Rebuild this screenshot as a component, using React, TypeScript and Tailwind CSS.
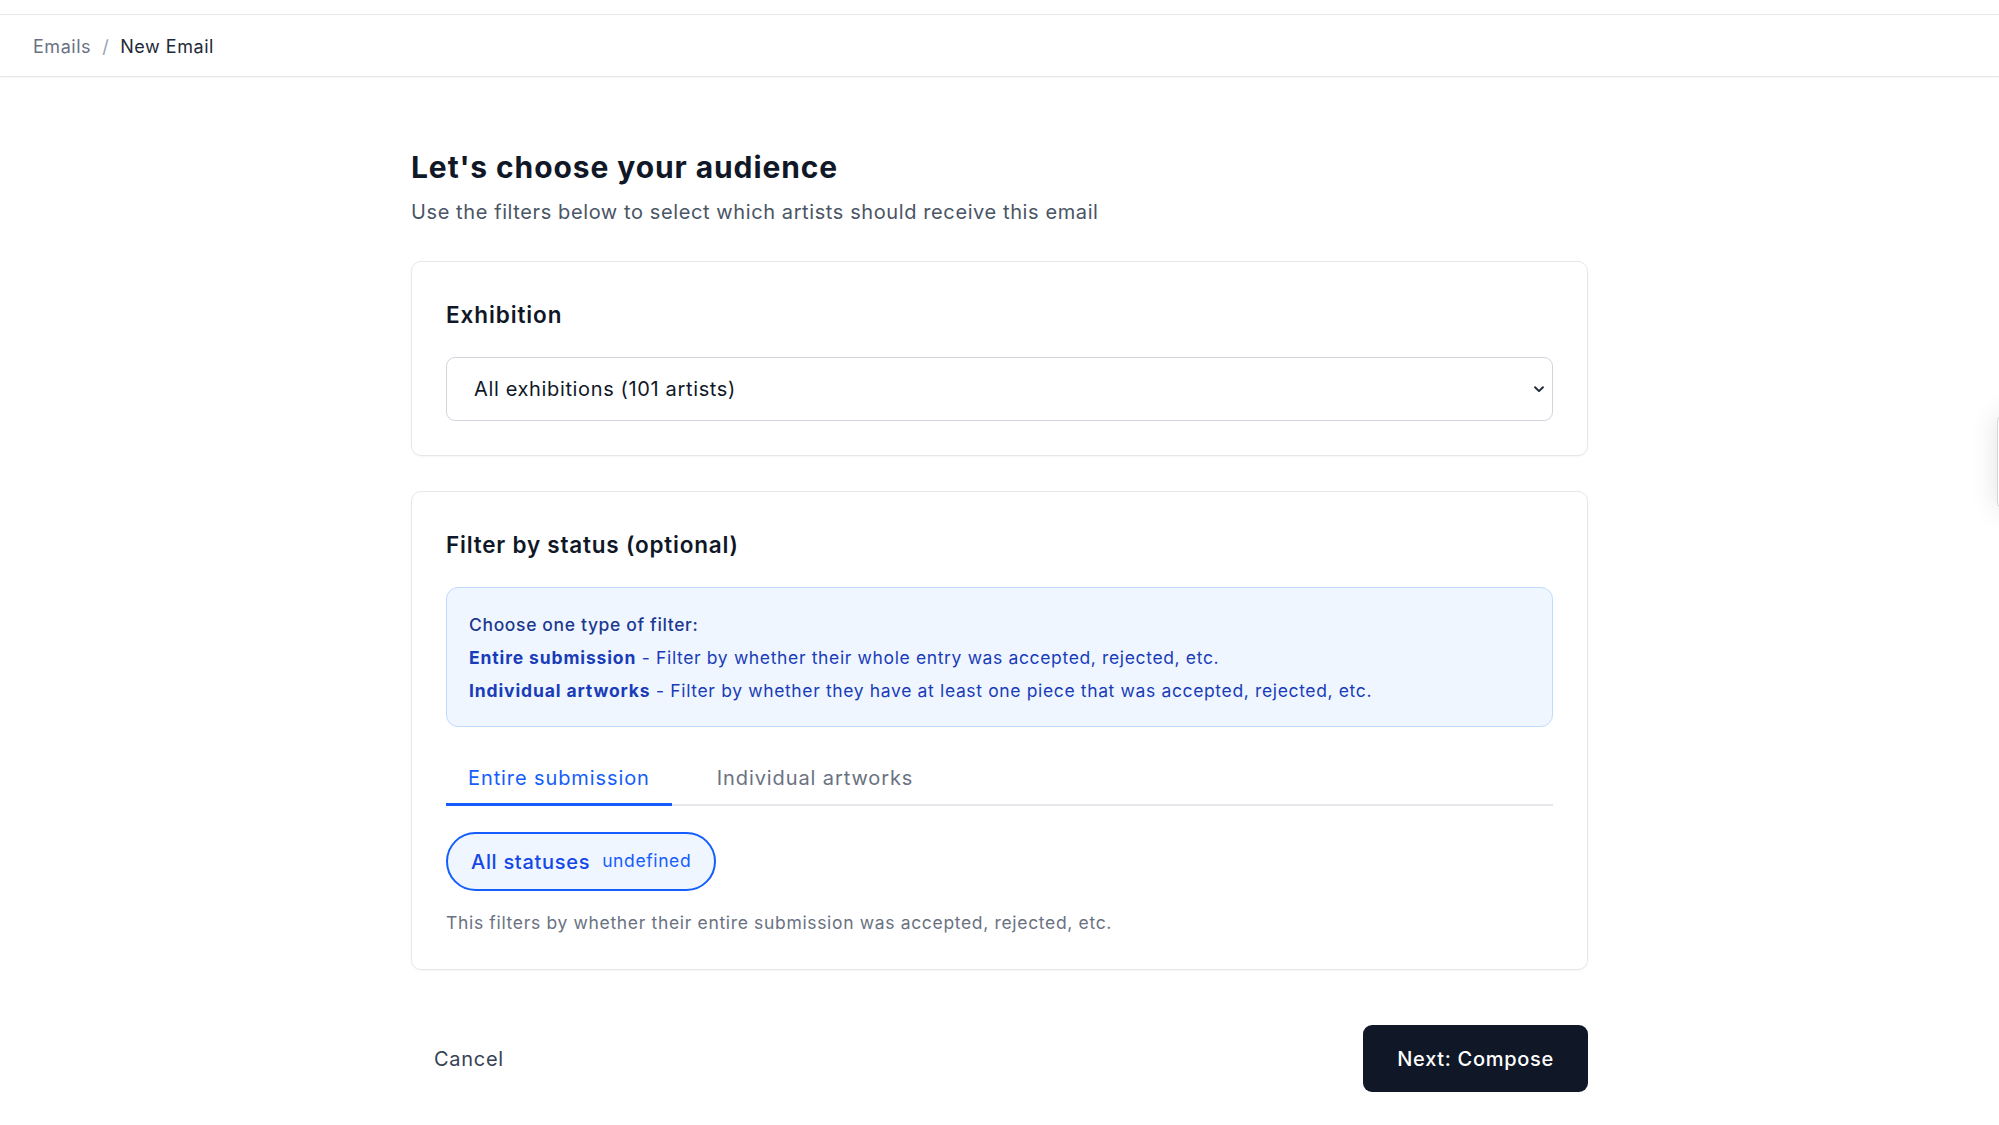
import { useState } from 'react';

function Chevron() {
  return (
    <svg width="14" height="14" viewBox="0 0 16 16" fill="none" className="text-gray-800">
      <path d="M3.5 6l4.5 4.5L12.5 6" stroke="currentColor" strokeWidth="2.2" strokeLinecap="round" strokeLinejoin="round" />
    </svg>
  );
}

export default function App() {
  const [tab, setTab] = useState<'entire' | 'individual'>('entire');

  return (
    <div className="relative min-h-[1125px] overflow-hidden bg-white font-['Inter','Liberation_Sans',sans-serif] tracking-[0.04em] text-gray-900">
      <div className="h-[15px] border-b border-gray-200" />
      <nav className="flex h-[62px] items-center border-b border-gray-200 px-[33px] pt-[2px] text-[18px] tracking-[0.03em] shadow-[0_1px_2px_rgba(0,0,0,0.04)]">
        <span className="text-gray-500">Emails</span>
        <span className="mx-[11px] text-gray-400">/</span>
        <span className="text-gray-800">New Email</span>
      </nav>

      <main className="mx-auto w-[1177px] pt-[70px]">
        <h1 className="text-[30px] font-bold leading-[40px] tracking-[0.03em] text-gray-900">Let's choose your audience</h1>
        <p className="mt-[10px] text-[20px] leading-[30px] tracking-[0.03em] text-gray-600">
          Use the filters below to select which artists should receive this email
        </p>

        <section className="mt-[34px] rounded-[10px] border border-gray-200 px-[34px] pb-[34px] pt-[36px] shadow-[0_1px_2px_rgba(0,0,0,0.04)]">
          <h2 className="text-[22.5px] font-semibold leading-[34px] tracking-[0.04em] text-gray-900">Exhibition</h2>
          <div className="mt-[25px] flex h-[64px] items-center justify-between rounded-[9px] border border-gray-300 pl-[27px] pr-[6px] text-[20px] text-gray-900">
            <span>All exhibitions (101 artists)</span>
            <Chevron />
          </div>
        </section>

        <section className="mt-[35px] rounded-[10px] border border-gray-200 px-[34px] pb-[34px] pt-[36px] shadow-[0_1px_2px_rgba(0,0,0,0.04)]">
          <h2 className="text-[22.5px] font-semibold leading-[34px] tracking-[0.035em] text-gray-900">Filter by status (optional)</h2>

          <div className="mt-[25px] flex h-[140px] flex-col justify-center gap-[8px] rounded-[12px] border border-blue-200 bg-blue-50 px-[22px] text-[17.5px] leading-[25px] text-blue-800">
            <p className="font-medium text-blue-900">Choose one type of filter:</p>
            <p>
              <span className="font-bold tracking-[0.05em]">Entire submission</span> - Filter by whether their whole entry was accepted, rejected, etc.
            </p>
            <p>
              <span className="font-bold tracking-[0.05em]">Individual artworks</span> - Filter by whether they have at least one piece that was accepted, rejected, etc.
            </p>
          </div>

          <div className="mt-[23px] flex gap-[23px] border-b-2 border-gray-200">
            <button
              onClick={() => setTab('entire')}
              className={
                tab === 'entire'
                  ? '-mb-[2px] border-b-[3px] border-blue-600 px-[22px] pb-[10px] pt-[13px] text-[20px] leading-[30px] tracking-[0.045em] text-blue-600'
                  : '-mb-[2px] border-b-[3px] border-transparent px-[22px] pb-[10px] pt-[13px] text-[20px] leading-[30px] tracking-[0.045em] text-gray-500'
              }
            >
              Entire submission
            </button>
            <button
              onClick={() => setTab('individual')}
              className={
                tab === 'individual'
                  ? '-mb-[2px] border-b-[3px] border-blue-600 px-[22px] pb-[10px] pt-[13px] text-[20px] leading-[30px] tracking-[0.045em] text-blue-600'
                  : '-mb-[2px] border-b-[3px] border-transparent px-[22px] pb-[10px] pt-[13px] text-[20px] leading-[30px] tracking-[0.045em] text-gray-500'
              }
            >
              Individual artworks
            </button>
          </div>

          <div className="mt-[26px] flex">
            <button className="flex h-[59px] items-center gap-[12px] rounded-full border-2 border-blue-600 bg-blue-50 px-[23px]">
              <span className="text-[20px] font-medium tracking-[0.035em] text-blue-700">All statuses</span>
              <span className="text-[17.5px] tracking-[0.035em] text-blue-600">undefined</span>
            </button>
          </div>

          <p className="mt-[19px] text-[17.5px] leading-[25px] tracking-[0.038em] text-gray-500">
            This filters by whether their entire submission was accepted, rejected, etc.
          </p>
        </section>

        <div className="mt-[55px] flex items-center justify-between">
          <button className="rounded-[9px] px-[23px] py-[18px] text-[20px] leading-[30px] tracking-[0.035em] text-gray-700">Cancel</button>
          <button className="h-[67px] rounded-[9px] bg-gray-900 px-[34px] text-[20px] font-medium tracking-[0.035em] text-white">Next: Compose</button>
        </div>
      </main>

      <div className="absolute left-[1997px] top-[414px] h-[96px] w-[40px] rounded-l-lg border border-gray-300 bg-white shadow-[0_0_28px_rgba(0,0,0,0.12)]" />
    </div>
  );
}
